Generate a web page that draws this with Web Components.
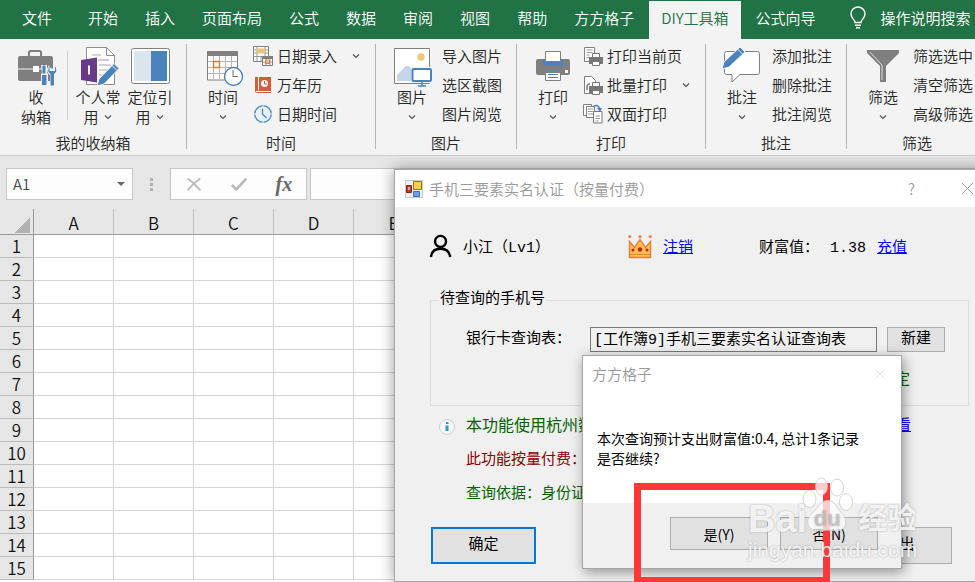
<!DOCTYPE html>
<html lang="zh-CN">
<head>
<meta charset="utf-8">
<title>DIY工具箱</title>
<style>
  html, body {
    margin: 0;
    height: 100%;
    overflow: hidden;
  }
  body {
    font: 15px/20px "Noto Sans CJK SC", sans-serif;
    font-weight: 350;
    color: #262626;
    background: #e6e6e6;
  }
</style>
</head>
<body>
<excel-app></excel-app>

<script>
// Every drawing on the page. [viewBox size, markup]
const ICONS = {
  chevron: [10, '<path d="M2 3.5l3 3 3-3" fill="none" stroke="#555" stroke-width="1.2"/>'],
  bulb: [22, '<g fill="none" stroke="#fff" stroke-width="1.4"><path d="M8 15.500c0-3-4-4-4-8.500a7 7 0 0 1 14 0c0 4.500-4 5.500-4 8.500z"/><path d="M8 18.200h6M9 20.800h4"/></g>'],
  briefcase: [40, `<path d="M13 10V5.500q0-1.500 1.500-1.500h9q1.500 0 1.500 1.500V10" fill="none" stroke="#7f7f7f" stroke-width="2"/>
    <rect x="2" y="9" width="35" height="25" rx="2" fill="#7f7f7f"/><path d="M2 22h35" stroke="#f3f3f3"/>
    <path d="M17 19h6v6h-6z" fill="#fff"/>
    <path d="M25 18h6v8l1 1v12h-7V27l1-1zM33 18l-2 4q0 4 3 6v11h5V28q3-2 2-7l-2-3-1 4h-3z" fill="#f3f3f3"/>
    <path d="M26.500 18.500h3v8h-3zM26 28h4.500v10H26z" fill="#4a82bb"/>
    <path d="M33.500 19q-3 5 1 8v11.500h3.500V27q4-3 1-8v5h-5.500z" fill="#4a82bb"/>`],
  notes: [40, `<path d="M8.500.500h20l8 8v29h-28z" fill="#fff" stroke="#8c8c8c"/><path d="M28.500.500v8h8" fill="none" stroke="#8c8c8c"/>
    <path d="M14 8h9M21 18h12M21 23h9M21 28h7" stroke="#aaa"/><path d="M20 13h11" stroke="#b08cc8"/>
    <path d="M3 13l16-2.500v25L3 33z" fill="#683a8a"/><path d="M10 18.500h2v9h-2z" fill="#fff"/>
    <path d="M19 39l2-7L36 16.500l5 5L26 37z" fill="#4a82bb" stroke="#f3f3f3"/><path d="M34 18.500l5 5" stroke="#f3f3f3"/>`],
  panel: [40, `<rect x="1.500" y="1.500" width="38" height="35" rx="2" fill="#fff" stroke="#7f7f7f"/>
    <path d="M4 4h17v30H4z" fill="#dbe5f0"/><path d="M21 4h16v30H21z" fill="#4a82bb"/>`],
  calendar: [40, `<path d="M4.500 6h30v27h-30z" fill="#fff" stroke="#7f7f7f"/><path d="M4 4h31v5H4z" fill="#7f7f7f"/>
    <path d="M10.500 9v24M16.500 9v24M22.500 9v24M28.500 9v24M5 14.500h29M5 20.500h29M5 26.500h29" stroke="#b5b5b5"/>
    <path d="M10.500 14.500h6v6h-6z" fill="#fff" stroke="#e07b2f" stroke-width="1.400"/>
    <circle cx="30.500" cy="29.500" r="9" fill="#fff" stroke="#4a82bb" stroke-width="1.400"/><path d="M30 23v6.500h5" fill="none" stroke="#666"/>`],
  picture: [40, `<path d="M2.500 1.500h35v35h-35z" fill="#fff" stroke="#7f7f7f"/><circle cx="29" cy="10" r="3.700" fill="#f0c67a"/>
    <path d="M5 34v-6l9-9h3l3 3v12z" fill="#c3d5ea"/><path d="M19 20h22v16H19z" fill="#f3f3f3"/>
    <rect x="20.500" y="22" width="18.500" height="12" rx="1" fill="#fff" stroke="#4a82bb" stroke-width="2"/>
    <path d="M30 35v4M26 39h8" stroke="#4a82bb" stroke-width="1.500"/>`],
  printer: [40, `<rect x="3" y="12" width="34" height="16" rx="2" fill="#7f7f7f"/><path d="M10 12h20v7H10z" fill="#4a82bb"/>
    <path d="M12.500 4.500h15v10h-15z" fill="#fff" stroke="#7f7f7f"/><path d="M12.500 25.500h15v8h-15z" fill="#fff" stroke="#7f7f7f"/>
    <path d="M15 27.500h10M15 30.500h10" stroke="#4a82bb"/><path d="M32 23h3v3h-3z" fill="#fff"/>`],
  comment: [40, `<path d="M4.500 4.500h31q2 0 2 2v19q0 2-2 2H18l-8 7.500v-7.500H4.500q-2 0-2-2v-19q0-2 2-2z" fill="#fff" stroke="#7f7f7f"/>
    <path d="M0 22l2-7L18 0l5 5L7 20z" fill="#4a82bb" stroke="#f3f3f3"/><path d="M15.500 2l5 5" stroke="#f3f3f3"/>`],
  funnel: [40, '<path d="M4 3h32v3L23 19v16h-6V19L4 6z" fill="#7f7f7f"/><path d="M7 5l12 13v15" fill="none" stroke="#ddd"/>'],
  dateEntry: [20, `<path d="M.500.500h15v15H.500z" fill="#fff" stroke="#7f7f7f"/><path d="M4 .5v15M12 .5v15M.5 10.500h15M.5 4h3M12 4h3M.5 7h3M12 7h3M8 10v5" stroke="#999"/>
    <path d="M4 2.500h8v5H4z" fill="#edc377"/><path d="M9.500 11h10v8.500h-10z" fill="#fff" stroke="#7f7f7f"/><path d="M9 10h11v3H9z" fill="#7f7f7f"/>
    <path d="M13 13v6M17 13v6M10 16h9" stroke="#999"/><path d="M12.500 14h4v3.500h-4z" fill="none" stroke="#e07b2f"/>`],
  almanac: [20, `<path d="M2 2h16v16H4q-2 0-2-2z" fill="#d65b3d"/><path d="M5.500 2v13.500" stroke="#f3f3f3"/><path d="M3 16.500h15" stroke="#fff"/>
    <circle cx="11.500" cy="8.500" r="3.500" fill="#fff"/><path d="M11.500 6v3h2.500" fill="none" stroke="#d65b3d"/>`],
  clock: [20, `<circle cx="10" cy="10" r="8.300" fill="#eaf3fa" stroke="#4a8fc8" stroke-width="1.400"/><path d="M9.500 4.500v5.500l4 4" fill="none" stroke="#4a82bb" stroke-width="1.300"/>
    <path d="M10 .5v3M10 16.500v3M.5 10h3M16.500 10h3" stroke="#f3f3f3"/>`],
  printPage: [20, `<path d="M1.500 1.500h10v14h-10z" fill="#fff" stroke="#7f7f7f"/><path d="M3.500 4h6M3.500 6.500h6M3.500 9h3M3.500 11.500h3" stroke="#999"/>
    <path d="M6 11h14v7H6z" fill="#777"/><path d="M9.500 7.500h7v4h-7zM9.500 15.500h7v4h-7z" fill="#fff" stroke="#777"/>`],
  printBatch: [20, `<path d="M1.500 1.500h7l4 4v13h-11z" fill="#fff" stroke="#7f7f7f"/><path d="M4 15v-3q0-3 3-3" fill="none" stroke="#777" stroke-width="1.500"/>
    <path d="M6 11h14v7H6z" fill="#777"/><path d="M9.500 7.500h7v4h-7zM9.500 15.500h7v4h-7z" fill="#fff" stroke="#777"/>`],
  printDuplex: [20, `<path d="M.500.500h8v11h-8z" fill="#fff" stroke="#7f7f7f"/><path d="M3.500 2.500h8v11h-8z" fill="#fff" stroke="#7f7f7f"/><path d="M5 5h5M5 7.500h5M5 10h5" stroke="#999"/>
    <path d="M10.500 7.500h8.500v11.500h-8.500z" fill="#fff" stroke="#777"/><path d="M12.500 12h4.500M12.500 14.500h4.500M12.500 17h3" stroke="#999"/>
    <path d="M10 3q4-4 7 2" fill="none" stroke="#4a82bb" stroke-width="1.500"/><path d="M14 4h5l-2 4z" fill="#4a82bb"/>`],
  cancel: [20, '<path d="M3 4q7 5 14 13M17 4Q9 9 3 17" fill="none" stroke="#bababa" stroke-width="2"/>'],
  accept: [20, '<path d="M2 11l5 5L18 4" fill="none" stroke="#bababa" stroke-width="3"/>'],
  close: [14, '<path d="M1 1l12 12M13 1L1 13" stroke="currentColor"/>'],
  form: [18, `<path d="M.500.500h17v17H.500z" fill="#eef0f3" stroke="#c5c9d0"/><path d="M8.500 1.500h8v8h-8z" fill="#f7cf4d" stroke="#9a7418"/>
    <path d="M1.500 5.500h5v7h-5z" fill="#c43a2e" stroke="#842018"/><path d="M3 7h2v3H3z" fill="#e9a49a"/><path d="M8.500 11.500h6v5h-6z" fill="#6da0ee" stroke="#3e6fc4"/>`],
  person: [24, '<g fill="none" stroke="#000" stroke-width="2.600"><circle cx="11.500" cy="7" r="6"/><path d="M1 24q1-9 10.500-9T22 24"/></g>'],
  crown: [24, `<path d="M1.500 6.500l5 6 5.500-8 5.500 8 5-6v16h-21z" fill="#fbc04f" stroke="#e5813f" stroke-width="1.500"/><path d="M2 19.500h20" stroke="#e5813f"/>
    <g fill="#e08a50"><circle cx="1.800" cy="1.500" r="1.600"/><circle cx="12" cy="1.500" r="1.600"/><circle cx="22.200" cy="1.500" r="1.600"/></g>
    <g fill="#c9201c"><circle cx="12" cy="14.500" r="2.300"/><circle cx="5" cy="15" r="1.500"/><circle cx="19" cy="15" r="1.500"/></g>`],
  info: [16, '<circle cx="8" cy="8" r="7.500" fill="#f7f7f7" stroke="#cfcfcf"/><path d="M7 3h2.500v2H7zM6.500 6.500h3V12h-3z" fill="#2b9ccf"/>'],
  paw: [48, `<g fill="#fff" fill-opacity=".75" stroke="#c9c9c9" stroke-opacity=".8"><ellipse cx="6.500" cy="22" rx="6.500" ry="8.500"/><ellipse cx="18.500" cy="9.500" rx="6" ry="8.500"/>
    <ellipse cx="34" cy="10.500" rx="6.500" ry="8.500"/><ellipse cx="43" cy="25" rx="6.500" ry="8.500"/>
    <path d="M25 23.500c7 0 8 7 13 12 6 5 7 16-2 18-4 1-8-.5-12-.5s-7 1.500-12 .5c-9-2-9-12-3-17 6-5 8-13 16-13z"/></g>`],
}

// Shared by every component: open shadow root filled from html + css
class Base extends HTMLElement {
  constructor() {
    super()
    this.attachShadow({ mode: 'open' })
  }
  connectedCallback() {
    this.shadowRoot.innerHTML = `<style>* { box-sizing: border-box; }${this.css()}</style>${this.html()}`
  }
  attr(name) {
    return this.getAttribute(name) || ''
  }
}

class UiIcon extends Base {
  css() {
    return `
      :host { display: inline-block; flex: none; width: ${this.attr('size')}px; height: ${this.attr('size')}px; }
      svg { display: block; width: 100%; height: 100%; overflow: visible; }
    `
  }
  html() {
    const [box, body] = ICONS[this.attr('name')]
    return `<svg viewBox="0 0 ${box} ${box}" aria-hidden="true">${body}</svg>`
  }
}

class RibbonTabs extends Base {
  css() {
    return `
      :host { display: block; background: #217346; }
      nav { display: flex; gap: 3px; height: 39px; padding: 1px 0 0 1px; }
      button { flex: none; border: 0; padding: 0 12px 4px; background: none; color: #fff; font: inherit; white-space: nowrap; }
      .file { padding: 0 21px 4px; }
      .on { background: #f3f3f3; color: #217346; }
      .tell { display: flex; align-items: center; gap: 12px; margin-left: 4px; }
    `
  }
  html() {
    const tabs = ['文件', '开始', '插入', '页面布局', '公式', '数据', '审阅', '视图', '帮助', '方方格子', 'DIY工具箱', '公式向导']
    const cls = t => t === '文件' ? 'file' : t === 'DIY工具箱' ? 'on' : ''
    return `<nav>${tabs.map(t => `<button class="${cls(t)}">${t}</button>`).join('')}
      <button class="tell"><ui-icon name="bulb" size="22"></ui-icon>操作说明搜索</button></nav>`
  }
}

class RibbonGroup extends Base {
  css() {
    return `
      :host { display: flex; flex: none; }
      section { display: flex; flex-direction: column; padding: 2px 10px 0; }
      .tools { display: flex; height: 92px; }
      .label { text-align: center; }
      .line { width: 1px; margin: 5px 0 6px; background: #b4b4b4; }
      :host(:last-of-type) .line { display: none; }
    `
  }
  html() {
    return `<section><div class="tools"><slot></slot></div><div class="label">${this.attr('label')}</div></section><div class="line"></div>`
  }
}

class RibbonLarge extends Base {
  css() {
    return `
      :host { display: block; width: 52px; }
      button { display: flex; flex-direction: column; align-items: center; width: 100%; border: 0; padding: 6px 0 0; background: none; color: inherit; font: inherit; line-height: 20px; }
      span { display: block; white-space: nowrap; }
      .second { display: flex; align-items: center; gap: 4px; height: 20px; }
    `
  }
  html() {
    const chevron = this.hasAttribute('menu') ? '<ui-icon name="chevron" size="10"></ui-icon>' : ''
    return `<button><ui-icon name="${this.attr('icon')}" size="40"></ui-icon><span>${this.attr('text')}</span><span class="second">${this.attr('more')}${chevron}</span></button>`
  }
}

class RibbonSmall extends Base {
  css() {
    return `
      :host { display: block; height: 29px; }
      button { display: flex; align-items: center; gap: 4px; height: 100%; border: 0; padding: 0 4px; background: none; color: inherit; font: inherit; white-space: nowrap; }
      .menu { margin-left: 10px; }
    `
  }
  html() {
    const icon = this.attr('icon') ? `<ui-icon name="${this.attr('icon')}" size="20"></ui-icon>` : ''
    const chevron = this.hasAttribute('menu') ? '<ui-icon class="menu" name="chevron" size="10"></ui-icon>' : ''
    return `<button>${icon}${this.textContent}${chevron}</button>`
  }
}

class RibbonBar extends Base {
  css() {
    return `
      :host { display: flex; height: 117px; overflow: hidden; background: #f3f3f3; border-bottom: 1px solid #cfcfcf; }
      .sep { width: 1px; height: 69px; margin: 10px 4px 0 5px; background: #d0d0d0; }
    `
  }
  html() {
    return `
      <ribbon-group label="我的收纳箱">
        <ribbon-large icon="briefcase" text="收" more="纳箱"></ribbon-large>
        <div class="sep"></div>
        <ribbon-large icon="notes" text="个人常" more="用" menu></ribbon-large>
        <ribbon-large icon="panel" text="定位引" more="用" menu></ribbon-large>
      </ribbon-group>
      <ribbon-group label="时间">
        <ribbon-large icon="calendar" text="时间" menu></ribbon-large>
        <div>
          <ribbon-small icon="dateEntry" menu>日期录入</ribbon-small>
          <ribbon-small icon="almanac">万年历</ribbon-small>
          <ribbon-small icon="clock">日期时间</ribbon-small>
        </div>
      </ribbon-group>
      <ribbon-group label="图片">
        <ribbon-large icon="picture" text="图片" menu></ribbon-large>
        <div>
          <ribbon-small>导入图片</ribbon-small>
          <ribbon-small>选区截图</ribbon-small>
          <ribbon-small>图片阅览</ribbon-small>
        </div>
      </ribbon-group>
      <ribbon-group label="打印">
        <ribbon-large icon="printer" text="打印" menu></ribbon-large>
        <div>
          <ribbon-small icon="printPage">打印当前页</ribbon-small>
          <ribbon-small icon="printBatch" menu>批量打印</ribbon-small>
          <ribbon-small icon="printDuplex">双面打印</ribbon-small>
        </div>
      </ribbon-group>
      <ribbon-group label="批注">
        <ribbon-large icon="comment" text="批注" menu></ribbon-large>
        <div>
          <ribbon-small>添加批注</ribbon-small>
          <ribbon-small>删除批注</ribbon-small>
          <ribbon-small>批注阅览</ribbon-small>
        </div>
      </ribbon-group>
      <ribbon-group label="筛选">
        <ribbon-large icon="funnel" text="筛选" menu></ribbon-large>
        <div>
          <ribbon-small>筛选选中</ribbon-small>
          <ribbon-small>清空筛选</ribbon-small>
          <ribbon-small>高级筛选</ribbon-small>
        </div>
      </ribbon-group>`
  }
}

class FormulaBar extends Base {
  css() {
    return `
      :host { display: flex; padding: 12px 0 9px 6px; background: #e6e6e6; }
      .box { display: flex; align-items: center; height: 32px; background: #fdfdfd; border: 1px solid #c6c6c6; }
      input { min-width: 0; border: 0; padding: 0; background: none; font: inherit; color: #444; outline: 0; }
      .name { width: 127px; padding: 0 7px 0 6px; }
      .name input { flex: 1; }
      .arrow { border: 4px solid transparent; border-top-color: #666; border-bottom: 0; }
      .dots { display: grid; align-content: center; gap: 2px; width: 37px; justify-content: center; }
      .dots i { width: 3px; height: 3px; background: #b0b0b0; }
      .fx { width: 137px; justify-content: space-around; margin-right: 3px; }
      button { border: 0; padding: 0; background: none; color: #666; font: italic bold 20px/28px "Liberation Serif", serif; }
      .fx ui-icon { display: block; }
      .formula { flex: 1; }
    `
  }
  html() {
    return `
      <div class="box name"><input value="A1" aria-label="名称框"><span class="arrow"></span></div>
      <div class="dots"><i></i><i></i><i></i></div>
      <div class="box fx">
        <button aria-label="取消"><ui-icon name="cancel" size="18"></ui-icon></button>
        <button aria-label="输入"><ui-icon name="accept" size="18"></ui-icon></button>
        <button>fx</button>
      </div>
      <div class="box formula"><input aria-label="编辑栏"></div>`
  }
}

class SheetGrid extends Base {
  css() {
    return `
      :host { display: block; flex: 1; min-height: 0; overflow: hidden; background: #fff; color: #111; }
      table { table-layout: fixed; width: 914px; border-collapse: separate; border-spacing: 0; font-size: 17px; line-height: 22px; }
      th, td { height: 23px; padding: 0; border-right: 1px solid #d4d4d4; border-bottom: 1px solid #d4d4d4; }
      th { background: #e6e6e6; font-weight: inherit; border-right-color: #bbb; border-bottom-color: #bbb; }
      thead th { height: 26px; padding-top: 3px; border-bottom-color: #999; }
      tbody th, .all { border-right-color: #999; }
      .all { width: 34px; }
      .all i { display: block; width: 15px; height: 15px; margin: 4px 3px 0 auto; background: linear-gradient(135deg, transparent 50%, #b2b2b2 50%); }
    `
  }
  html() {
    const cols = [...'ABCDEFGHIJK']
    const row = (_, i) => `<tr><th>${i + 1}</th>${cols.map(() => '<td></td>').join('')}</tr>`
    return `<table>
      <thead><tr><th class="all"><i></i></th>${cols.map(c => `<th>${c}</th>`).join('')}</tr></thead>
      <tbody>${Array.from({ length: 15 }, row).join('')}</tbody>
    </table>`
  }
}

// 手机三要素实名认证
class QueryDialog extends Base {
  css() {
    return `
      :host { display: block; background: #f0f0f0; border: 1px solid #a6a6a6; box-shadow: 0 0 14px rgba(0, 0, 0, .4); color: #000; font-family: "Liberation Mono", "Noto Sans CJK SC", monospace; font-weight: 400; }
      header { display: flex; align-items: center; height: 37px; padding: 0 10px; gap: 6px; background: #fff; color: #999; font-family: "Noto Sans CJK SC", sans-serif; font-weight: 350; }
      header span { flex: 1; }
      header button { display: flex; border: 0; padding: 0; background: none; color: inherit; font: inherit; }
      header .help { margin-right: 40px; }
      main { padding: 28px 15px 17px 35px; }
      a { color: #00f; }
      .user { display: grid; grid-template-columns: 198px 131px auto; height: 28px; }
      .user div { display: flex; align-items: center; gap: 11px; white-space: nowrap; }
      .user ui-icon { align-self: flex-start; }
      fieldset { margin: 27px 0 0; border: 1px solid #dcdcdc; padding: 17px 0 14px; min-width: 0; }
      legend { margin-left: 8px; padding: 0 1px; }
      .table { display: flex; align-items: center; padding: 0 23px 0 35px; }
      .table label { margin-right: 19px; white-space: nowrap; }
      .table input { flex: 1; min-width: 0; height: 25px; margin-right: 10px; padding: 0 3px 4px; border: 1px solid #7a7a7a; background: #f0f0f0; font: inherit; color: #000; }
      .btn { border: 1px solid #adadad; padding: 0; background: #e1e1e1; color: #000; font: inherit; }
      .new { width: 58px; height: 25px; }
      .state { margin-top: 19px; padding-right: 58px; text-align: right; color: #006400; }
      .notes { display: grid; grid-template-columns: 16px auto auto; justify-content: start; gap: 14px 11px; margin: 11px 0 22px; padding-left: 9px; color: #006400; white-space: nowrap; }
      .notes ui-icon { align-self: center; }
      .notes p { grid-column: 2; margin: 0; }
      .notes .first { font-size: 16px; }
      .notes .pay { color: #8b0000; }
      .notes a { margin-left: 291px; }
      footer { display: flex; justify-content: space-between; padding: 0 17px 0 1px; }
      footer .btn { width: 105px; height: 37px; }
      footer .ok { border: 2px solid #0078d7; }
    `
  }
  html() {
    return `
      <header>
        <ui-icon name="form" size="18"></ui-icon><span>手机三要素实名认证（按量付费）</span>
        <button class="help">?</button><button aria-label="关闭"><ui-icon name="close" size="13"></ui-icon></button>
      </header>
      <main>
        <div class="user">
          <div><ui-icon name="person" size="22"></ui-icon>小江（Lv1）</div>
          <div><ui-icon name="crown" size="24"></ui-icon><a href="#">注销</a></div>
          <div><span>财富值：</span><span>1.38</span><a href="#">充值</a></div>
        </div>
        <fieldset>
          <legend>待查询的手机号</legend>
          <div class="table">
            <label for="book">银行卡查询表：</label>
            <input id="book" value="[工作簿9]手机三要素实名认证查询表" readonly>
            <button class="btn new">新建</button>
          </div>
          <div class="state">定</div>
        </fieldset>
        <div class="notes">
          <ui-icon name="info" size="16"></ui-icon><p class="first">本功能使用杭州数</p><a href="#">看</a>
          <p class="pay">此功能按量付费：</p>
          <p>查询依据：身份证</p>
        </div>
        <footer><button class="btn ok">确定</button><button class="btn">退出</button></footer>
      </main>`
  }
}

class MessageBox extends Base {
  css() {
    return `
      :host { display: block; background: #fff; border: 1px solid #a6a6a6; box-shadow: 2px 3px 12px rgba(0, 0, 0, .4); color: #000; font-size: 14px; font-weight: 400; }
      header { display: flex; align-items: center; justify-content: space-between; height: 36px; padding: 0 15px 0 9px; color: #999; font-size: 15px; font-weight: 350; }
      header button { display: flex; border: 0; padding: 0; background: none; color: #ddd; }
      p { margin: 0; padding: 36px 14px 35px; white-space: nowrap; }
      footer { display: flex; justify-content: flex-end; gap: 12px; padding: 14px 23px 18px; background: #f0f0f0; }
      footer button { width: 98px; height: 33px; border: 1px solid #adadad; padding: 0; background: #e1e1e1; color: #000; font: inherit; }
    `
  }
  html() {
    return `
      <header>方方格子<button aria-label="关闭"><ui-icon name="close" size="12"></ui-icon></button></header>
      <p><slot></slot></p>
      <footer><button>是(Y)</button><button>否(N)</button></footer>`
  }
}

class BaiduMark extends Base {
  css() {
    return `
      :host { display: block; color: rgba(255, 255, 255, .85); text-shadow: 0 0 2px rgba(120, 120, 120, .6); font-family: "Liberation Sans", "Noto Sans CJK SC", sans-serif; font-weight: 400; white-space: nowrap; }
      .logo { display: flex; align-items: flex-end; height: 61px; }
      .logo b { font-size: 38px; line-height: 38px; font-weight: 700; }
      .paw { display: grid; align-self: stretch; margin-left: -4px; }
      .paw > * { grid-area: 1 / 1; }
      .logo .paw b { align-self: end; text-align: center; font-size: 22px; color: rgba(200, 200, 200, .6); }
      .logo .cn { margin-left: 7px; font-size: 29px; }
      .url { font-size: 21px; line-height: 24px; }
    `
  }
  html() {
    return `
      <div class="logo"><b>Bai</b><span class="paw"><ui-icon name="paw" size="48"></ui-icon><b>du</b></span><b class="cn">经验</b></div>
      <div class="url">jingyan.baidu.com</div>`
  }
}

class ExcelApp extends Base {
  css() {
    return `
      :host { display: flex; flex-direction: column; position: relative; height: 100vh; overflow: hidden; }
      /* floating windows over the sheet */
      query-dialog { position: absolute; left: 394px; right: -10px; top: 169px; }
      message-box { position: absolute; left: 582px; top: 355px; width: 320px; }
      .frame { position: absolute; left: 634px; top: 483px; width: 196px; height: 101px; box-sizing: border-box; border: 7px solid #fd3838; }
      baidu-mark { position: absolute; left: 748px; top: 477px; }
    `
  }
  html() {
    return `
      <ribbon-tabs></ribbon-tabs>
      <ribbon-bar></ribbon-bar>
      <formula-bar></formula-bar>
      <sheet-grid></sheet-grid>
      <query-dialog></query-dialog>
      <message-box>本次查询预计支出财富值:0.4, 总计1条记录<br>是否继续?</message-box>
      <div class="frame"></div>
      <baidu-mark></baidu-mark>`
  }
}

customElements.define('ui-icon', UiIcon)
customElements.define('ribbon-tabs', RibbonTabs)
customElements.define('ribbon-group', RibbonGroup)
customElements.define('ribbon-large', RibbonLarge)
customElements.define('ribbon-small', RibbonSmall)
customElements.define('ribbon-bar', RibbonBar)
customElements.define('formula-bar', FormulaBar)
customElements.define('sheet-grid', SheetGrid)
customElements.define('query-dialog', QueryDialog)
customElements.define('message-box', MessageBox)
customElements.define('baidu-mark', BaiduMark)
customElements.define('excel-app', ExcelApp)
</script>
</body>
</html>
